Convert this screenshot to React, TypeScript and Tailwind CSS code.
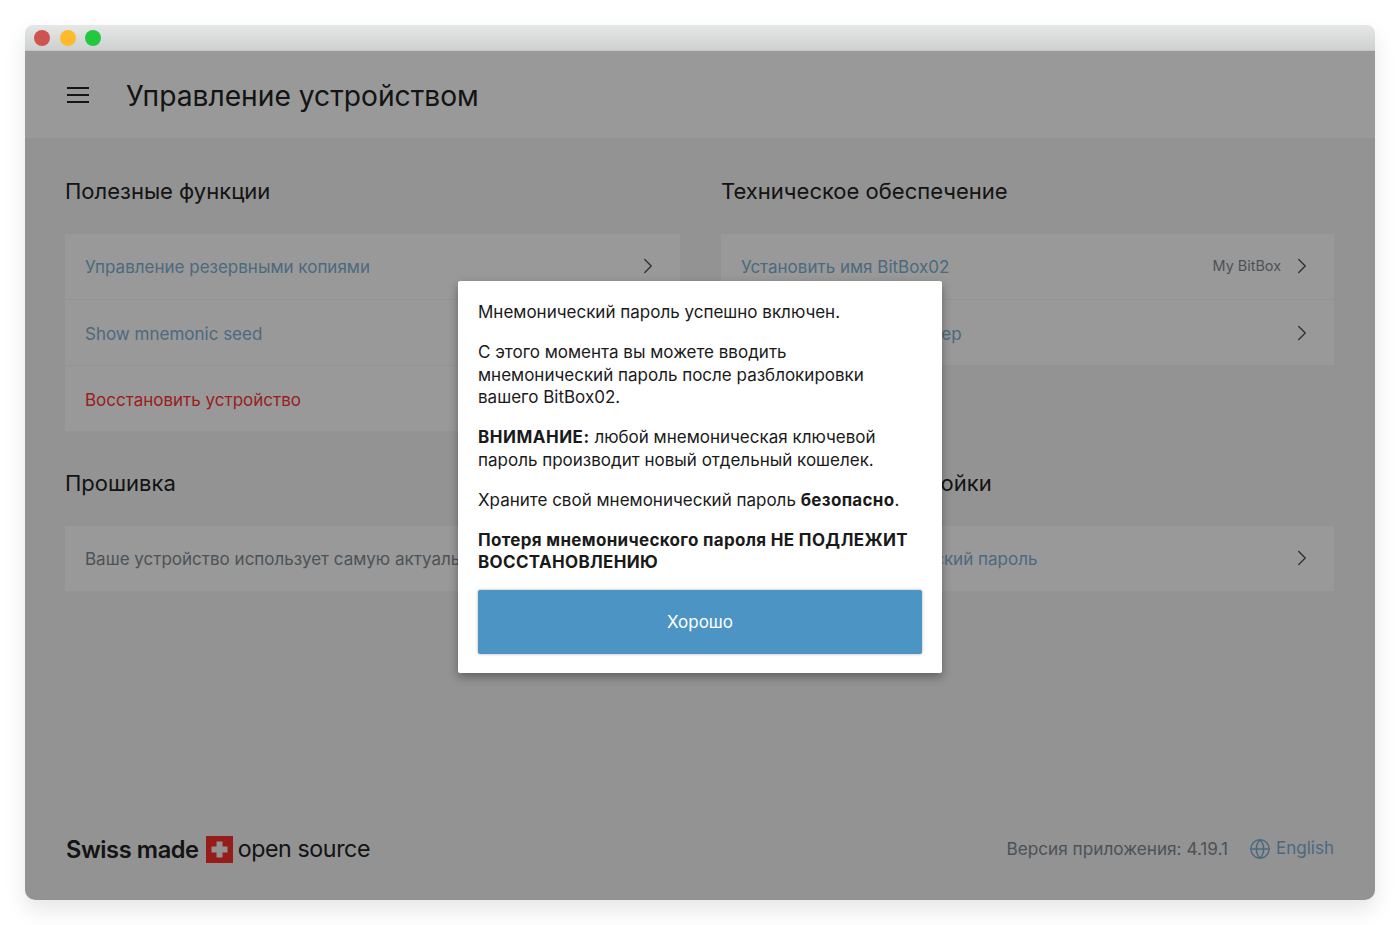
import { ChevronRight, Globe } from "lucide-react";

const Row = ({ label, value, color = "text-[#7fb0d2]" }: { label: string; value?: string; color?: string }) => (
    <div className="flex h-[66px] items-center justify-between border-b border-[#f6f6f6] bg-white pl-[20px] pr-[19px] first:pb-[2px] last:h-[65px] last:border-b-0">
        <span className={`whitespace-nowrap pt-[4px] text-[17px] ${color}`}>{label}</span>
        <div className="flex items-center gap-[8px]">
            {value && <span className="text-[14.4px] text-[#7f8a92]">{value}</span>}
            <ChevronRight className="h-[26px] w-[26px] text-[#555]" strokeWidth={1.3} />
        </div>
    </div>
);

const Section = ({ title, children }: { title: string; children: React.ReactNode }) => (
    <section>
        <h2 className="mb-[28px] text-[22px] leading-[30px] text-[#222]">{title}</h2>
        <div className="flex flex-col">{children}</div>
    </section>
);

export default function App() {
    return (
        <div className="min-h-[925px] bg-white pl-[25px] pt-[25px] font-['Inter','Liberation_Sans',sans-serif]">
            <div className="relative flex h-[875px] w-[1350px] flex-col overflow-hidden rounded-t-[8px] rounded-b-[10px] shadow-[0_10px_22px_rgba(0,0,0,0.1)]">
                {/* Title bar */}
                <div className="flex h-[26px] shrink-0 items-center gap-[9.5px] border-b border-[#c4c6c6] bg-gradient-to-b from-[#e6e7e7] to-[#cfd1d1] pl-[9px]">
                    <span className="h-[16px] w-[16px] rounded-full bg-[#cf5350]" />
                    <span className="h-[16px] w-[16px] rounded-full bg-[#fdbb2c]" />
                    <span className="h-[16px] w-[16px] rounded-full bg-[#24c83e]" />
                </div>

                <div className="relative flex flex-1 flex-col bg-[#f5f5f5]">
                    {/* Header */}
                    <header className="flex h-[87px] shrink-0 items-center bg-white pl-[42px]">
                        <svg width="22" height="16" viewBox="0 0 22 16" className="text-[#222]">
                            <path d="M0 1h22M0 8h22M0 15h22" stroke="currentColor" strokeWidth="2" />
                        </svg>
                        <h1 className="ml-[37px] pt-[3px] text-[28.2px] text-[#222]">Управление устройством</h1>
                    </header>

                    {/* Settings */}
                    <main className="grid grid-cols-[615px_613px] gap-x-[41px] gap-y-[37px] px-[40px] pt-[38px]">
                        <Section title="Полезные функции">
                            <Row label="Управление резервными копиями" />
                            <Row label="Show mnemonic seed" />
                            <Row label="Восстановить устройство" color="text-[#ff3333]" />
                        </Section>
                        <Section title="Техническое обеспечение">
                            <Row label="Установить имя BitBox02" value="My BitBox" />
                            <Row label="Проверить ваш контейнер" />
                        </Section>
                        <Section title="Прошивка">
                            <div className="flex h-[65px] items-center overflow-hidden bg-white pl-[20px]">
                                <span className="whitespace-nowrap pt-[2px] text-[17px] text-[#7f8a92]">
                                    Ваше устройство использует самую актуальную версию
                                </span>
                            </div>
                        </Section>
                        <Section title="Расширенные настройки">
                            <Row label="Отключить мнемонический пароль" />
                        </Section>
                    </main>

                    {/* Footer */}
                    <footer className="mt-auto flex h-[101px] items-center justify-between px-[41px]">
                        <div className="flex items-center text-[#222]">
                            <span className="text-[23.6px] font-semibold tracking-[-0.4px]">Swiss made</span>
                            <svg width="27" height="27" viewBox="0 0 27 27" className="ml-[7px] mr-[5px]">
                                <path d="M0 0h27v27H0z M10.5 5.5v5h-5v6h5v5h6v-5h5v-6h-5v-5z" fill="#fa302b" fillRule="evenodd" />
                            </svg>
                            <span className="text-[23.2px] tracking-[-0.4px]">open source</span>
                        </div>
                        <div className="flex items-center pb-[1px] text-[17.2px]">
                            <span className="text-[#7f8a92]">Версия приложения: 4.19.1</span>
                            <Globe className="ml-[21px] h-[22px] w-[22px] text-[#7fb0d2]" strokeWidth={1.6} />
                            <span className="ml-[5px] text-[17px] text-[#7fb0d2]">English</span>
                        </div>
                    </footer>

                    {/* Dialog */}
                    <div className="absolute inset-0 flex items-start justify-center bg-black/40 pt-[230px]">
                        <div className="w-[484px] rounded-[2px] bg-white p-[20px] pb-[19px] text-[17px] leading-[22.8px] text-[#1a1a1a] shadow-[0_4px_10px_rgba(0,0,0,0.35)]">
                            <div className="flex flex-col gap-[17px]">
                                <p>Мнемонический пароль успешно включен.</p>
                                <p>С этого момента вы можете вводить мнемонический пароль после разблокировки вашего BitBox02.</p>
                                <p><strong className="tracking-[0.5px]">ВНИМАНИЕ:</strong> любой мнемоническая ключевой пароль производит новый отдельный кошелек.</p>
                                <p>Храните свой мнемонический пароль <strong className="tracking-[0.3px]">безопасно</strong>.</p>
                                <p className="font-bold tracking-[0.32px]">Потеря мнемонического пароля НЕ ПОДЛЕЖИТ ВОССТАНОВЛЕНИЮ</p>
                            </div>
                            <button className="mt-[16px] h-[64px] w-full rounded-[2px] bg-[#4b94c4] text-white shadow-[0_0_3px_rgba(0,0,0,0.35)]">
                                Хорошо
                            </button>
                        </div>
                    </div>
                </div>
            </div>
        </div>
    );
}
